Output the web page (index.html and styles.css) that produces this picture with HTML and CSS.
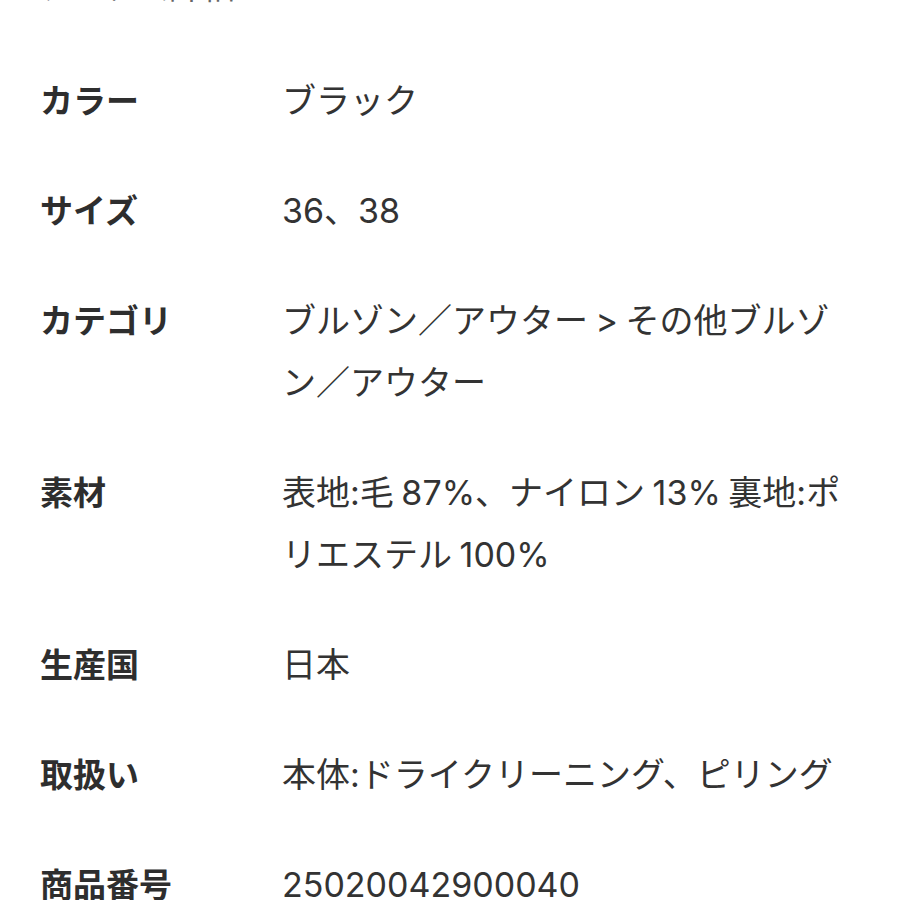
FILE: index.html
```html
<!DOCTYPE html>
<html lang="ja">
<head>
<meta charset="utf-8">
<link rel="stylesheet" href="styles.css">
</head>
<body>
<section class="spec">
  <h2 class="spec-title">アイテム詳細</h2>
  <dl class="spec-list">
    <div class="row"><dt>カラー</dt><dd>ブラック</dd></div>
    <div class="row"><dt>サイズ</dt><dd>36、38</dd></div>
    <div class="row"><dt>カテゴリ</dt><dd>ブルゾン／アウター &gt; その他ブルゾン／アウター</dd></div>
    <div class="row"><dt>素材</dt><dd>表地:毛 87%、ナイロン 13% 裏地:ポリエステル 100%</dd></div>
    <div class="row"><dt>生産国</dt><dd>日本</dd></div>
    <div class="row"><dt>取扱い</dt><dd>本体:ドライクリーニング、ピリング</dd></div>
    <div class="row"><dt>商品番号</dt><dd>25020042900040</dd></div>
  </dl>
</section>
</body>
</html>
```
FILE: styles.css
```css
html, body {
  margin: 0;
  padding: 0;
  background: #ffffff;
}
body {
  font-family: Inter, "Noto Sans CJK JP", sans-serif;
  color: #333333;
  overflow: hidden;
}
.spec {
  padding: 0 42px 0 40px;
}
.spec-title {
  margin: -44px 0 28px 0;
  font-size: 33px;
  line-height: 62px;
  font-weight: 400;
  color: #666666;
}
.spec-list {
  margin: 0;
}
.row {
  display: grid;
  grid-template-columns: 242px 1fr;
  padding: 24px 0;
  font-size: 33px;
  line-height: 62px;
}
.row dt {
  font-weight: 700;
  color: #2e2e2e;
}
.row dd {
  margin: 0;
  font-size: 34px;
  color: #333333;
  word-spacing: -2px;
}
```
